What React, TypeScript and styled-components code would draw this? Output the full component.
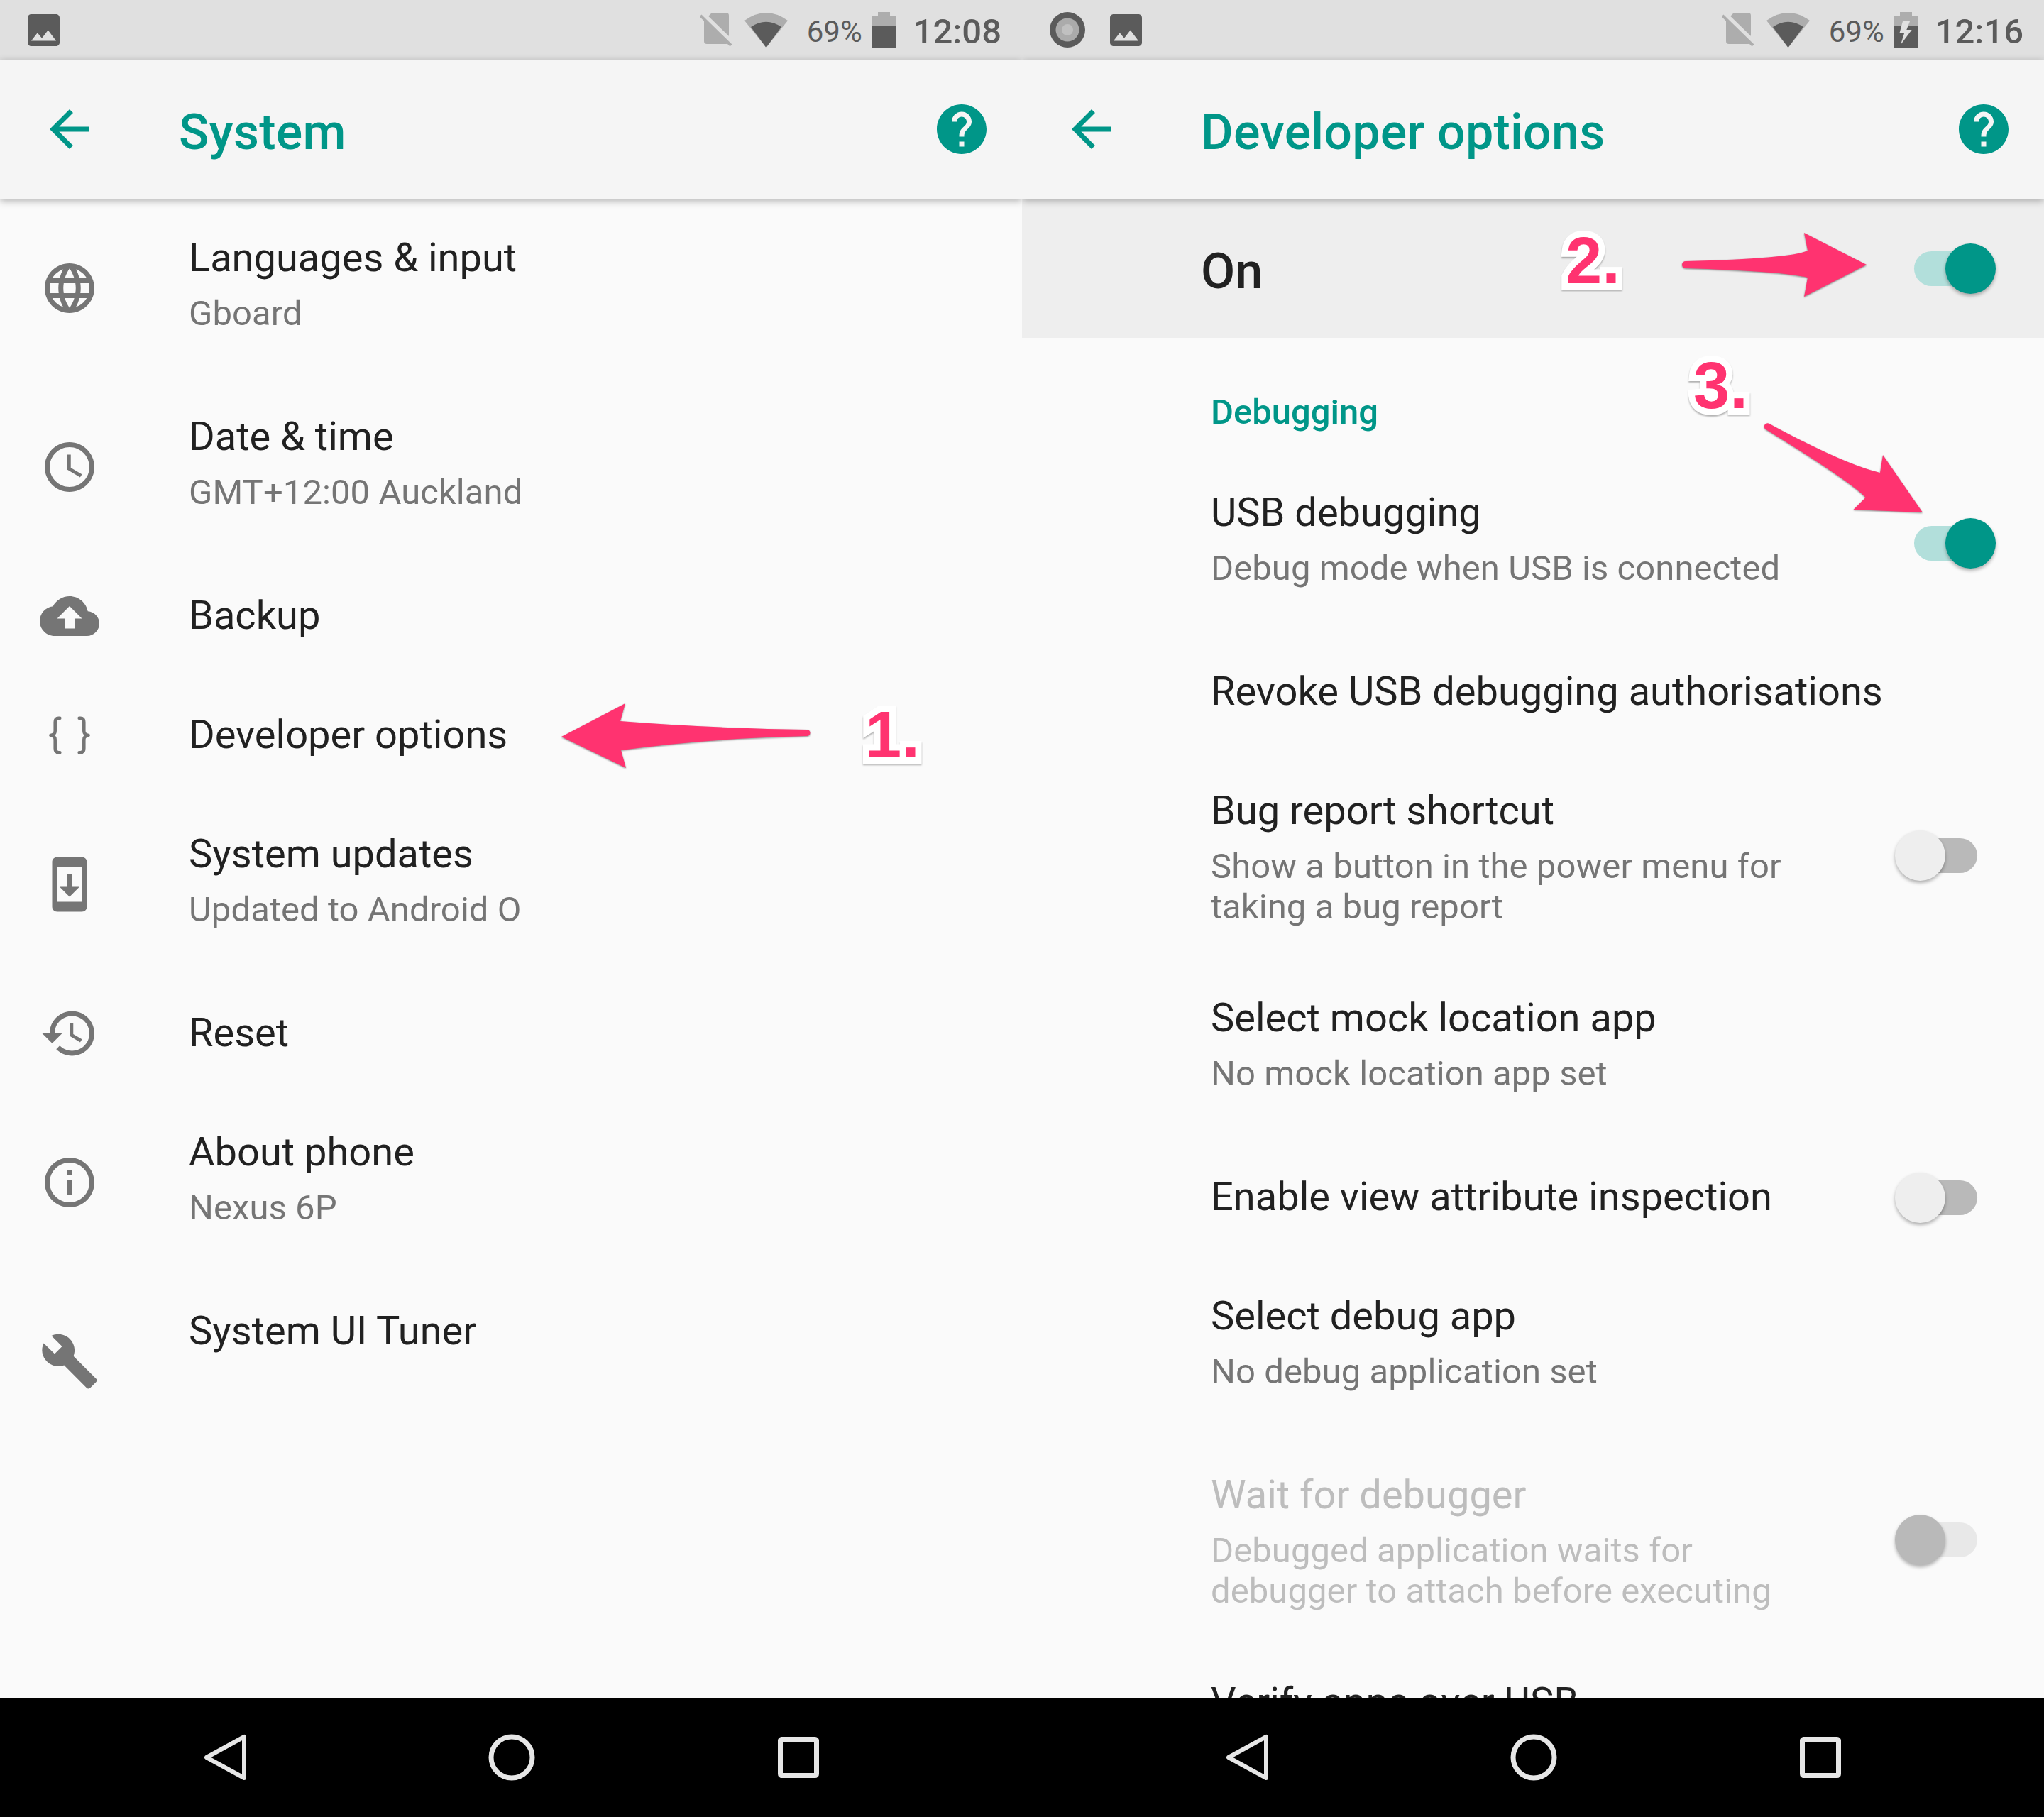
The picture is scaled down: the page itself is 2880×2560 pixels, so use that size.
import React from 'react';
import styled, { createGlobalStyle } from 'styled-components';

const ICONS: Record<string, string> = {
  language:
    'M11.99 2C6.47 2 2 6.48 2 12s4.47 10 9.99 10C17.52 22 22 17.52 22 12S17.52 2 11.99 2zm6.93 6h-2.95c-.32-1.25-.78-2.45-1.38-3.56 1.84.63 3.37 1.91 4.33 3.56zM12 4.04c.83 1.2 1.48 2.53 1.91 3.96h-3.82c.43-1.43 1.08-2.76 1.91-3.96zM4.26 14C4.1 13.36 4 12.69 4 12s.1-1.36.26-2h3.38c-.08.66-.14 1.32-.14 2 0 .68.06 1.34.14 2H4.26zm.82 2h2.95c.32 1.25.78 2.45 1.38 3.56-1.84-.63-3.37-1.9-4.33-3.56zm2.95-8H5.08c.96-1.66 2.49-2.93 4.33-3.56C8.81 5.55 8.35 6.75 8.03 8zM12 19.96c-.83-1.2-1.48-2.53-1.91-3.96h3.82c-.43 1.43-1.08 2.76-1.91 3.96zM14.34 14H9.66c-.09-.66-.16-1.32-.16-2 0-.68.07-1.35.16-2h4.68c.09.65.16 1.32.16 2 0 .68-.07 1.34-.16 2zm.25 5.56c.6-1.11 1.06-2.31 1.38-3.56h2.95c-.96 1.65-2.49 2.93-4.33 3.56zM16.36 14c.08-.66.14-1.32.14-2 0-.68-.06-1.34-.14-2h3.38c.16.64.26 1.31.26 2s-.1 1.36-.26 2h-3.38z',
  clock:
    'M11.99 2C6.47 2 2 6.48 2 12s4.47 10 9.99 10C17.52 22 22 17.52 22 12S17.52 2 11.99 2zM12 20c-4.42 0-8-3.58-8-8s3.58-8 8-8 8 3.58 8 8-3.58 8-8 8zM12.5 7H11v6l5.25 3.15.75-1.23-4.5-2.67z',
  backup:
    'M19.35 10.04C18.67 6.59 15.64 4 12 4 9.11 4 6.6 5.64 5.35 8.04 2.34 8.36 0 10.91 0 14c0 3.31 2.69 6 6 6h13c2.76 0 5-2.24 5-5 0-2.64-2.05-4.78-4.65-4.96zM14 13v4h-4v-4H7l5-5 5 5h-3z',
  update:
    'M17 1.01L7 1c-1.1 0-2 .9-2 2v18c0 1.1.9 2 2 2h10c1.1 0 2-.9 2-2V3c0-1.1-.9-1.99-2-1.99zM17 19H7V5h10v14zm-1-6h-3V8h-2v5H8l4 4 4-4z',
  restore:
    'M13 3c-4.97 0-9 4.03-9 9H1l3.89 3.89.07.14L9 12H6c0-3.87 3.13-7 7-7s7 3.13 7 7-3.13 7-7 7c-1.93 0-3.68-.79-4.94-2.06l-1.42 1.42C8.27 19.99 10.51 21 13 21c4.97 0 9-4.03 9-9s-4.03-9-9-9zm-1 5v5l4.28 2.54.72-1.21-3.5-2.08V8H12z',
  info:
    'M11 17h2v-6h-2v6zm1-15C6.48 2 2 6.48 2 12s4.48 10 10 10 10-4.48 10-10S17.52 2 12 2zm0 18c-4.41 0-8-3.59-8-8s3.59-8 8-8 8 3.59 8 8-3.59 8-8 8zM11 9h2V7h-2v2z',
  build:
    'M22.7 19l-9.1-9.1c.9-2.3.4-5-1.5-6.9-2-2-5-2.4-7.4-1.3L9 6 6 9 1.6 4.7C.4 7.1.9 10.1 2.9 12.1c1.9 1.9 4.6 2.4 6.9 1.5l9.1 9.1c.4.4 1 .4 1.4 0l2.3-2.3c.5-.4.5-1.1.1-1.4z',
};

const ARROW_BACK = 'M20 11H7.83l5.59-5.59L12 4l-8 8 8 8 1.41-1.41L7.83 13H20v-2z';
const HELP =
  'M12 2C6.48 2 2 6.48 2 12s4.48 10 10 10 10-4.48 10-10S17.52 2 12 2zm1 17h-2v-2h2v2zm2.07-7.75l-.9.92C13.45 12.9 13 13.5 13 15h-2v-.5c0-1.1.45-2.1 1.17-2.83l1.24-1.26c.37-.36.59-.86.59-1.41 0-1.1-.9-2-2-2s-2 .9-2 2H8c0-2.21 1.79-4 4-4s4 1.79 4 4c0 .88-.36 1.68-.93 2.25z';
const PHOTO = 'M21 19V5c0-1.1-.9-2-2-2H5c-1.1 0-2 .9-2 2v14c0 1.1.9 2 2 2h14c1.1 0 2-.9 2-2zM8.5 13.5l2.5 3.01L14.5 12l4.5 6H5l3.5-4.5z';

type Item = { title: string; summary?: string; icon: string };

const SYSTEM_ITEMS: Item[] = [
  { title: 'Languages & input', summary: 'Gboard', icon: 'language' },
  { title: 'Date & time', summary: 'GMT+12:00 Auckland', icon: 'clock' },
  { title: 'Backup', icon: 'backup' },
  { title: 'Developer options', icon: 'braces' },
  { title: 'System updates', summary: 'Updated to Android O', icon: 'update' },
  { title: 'Reset', icon: 'restore' },
  { title: 'About phone', summary: 'Nexus 6P', icon: 'info' },
  { title: 'System UI Tuner', summary: '\u00a0', icon: 'build' },
];

type Option = { title: string; summary?: string; height: number; toggle?: 'on' | 'off' | 'disabled'; disabled?: boolean };

const DEV_OPTIONS: Option[] = [
  { title: 'USB debugging', summary: 'Debug mode when USB is connected', height: 252, toggle: 'on' },
  { title: 'Revoke USB debugging authorisations', height: 168 },
  { title: 'Bug report shortcut', summary: 'Show a button in the power menu for taking a bug report', height: 292, toggle: 'off' },
  { title: 'Select mock location app', summary: 'No mock location app set', height: 252 },
  { title: 'Enable view attribute inspection', height: 168, toggle: 'off' },
  { title: 'Select debug app', summary: 'No debug application set', height: 252 },
  { title: 'Wait for debugger', summary: 'Debugged application waits for debugger to attach before executing', height: 292, toggle: 'disabled', disabled: true },
  { title: 'Verify apps over USB', height: 168 },
];

const ARROWS = [
  'M791 1038 L881 991 L874 1016 Q1000 1026 1137 1028 A4.5 4.5 0 0 1 1137 1037 Q1000 1040 875 1057 L882 1082 Z',
  'M2630 373 L2542 328 L2547 353 Q2525 364 2375 368 A5 5 0 0 0 2375 378 Q2510 382 2547 391 L2542 418 Z',
  'M2709 722 L2653 641 L2649 666 Q2600 655 2493 597 A4 4 0 0 0 2488 605 Q2610 680 2628.5 701 L2611.5 718 Z',
];

const NUMBERS = [
  { text: '1.', x: 1219, y: 1002 },
  { text: '2.', x: 2206, y: 334 },
  { text: '3.', x: 2386, y: 510 },
];

function ItemIcon({ name }: { name: string }) {
  if (name === 'braces') {
    return (
      <RowIcon viewBox="0 0 24 24" fill="none" stroke="#757575" strokeWidth="1.3" strokeLinecap="round" strokeLinejoin="round">
        <path d="M8.1 5.1 H7.6 C6.6 5.1 6.2 5.7 6.2 6.7 V10.3 C6.2 11.3 5.7 11.8 4.4 12 C5.7 12.2 6.2 12.7 6.2 13.7 V17.3 C6.2 18.3 6.6 18.9 7.6 18.9 H8.1" />
        <path d="M15.9 5.1 H16.4 C17.4 5.1 17.8 5.7 17.8 6.7 V10.3 C17.8 11.3 18.3 11.8 19.6 12 C18.3 12.2 17.8 12.7 17.8 13.7 V17.3 C17.8 18.3 17.4 18.9 16.4 18.9 H15.9" />
      </RowIcon>
    );
  }
  return (
    <RowIcon viewBox="0 0 24 24">
      <path d={ICONS[name]} fill="#757575" />
    </RowIcon>
  );
}

function StatusBar({ time, charging, recording }: { time: string; charging?: boolean; recording?: boolean }) {
  return (
    <StatusRow>
      <StatusGroup>
        {recording && (
          <RecordIcon viewBox="0 0 50 50">
            <circle cx="25" cy="25" r="25" fill="#5b5b5b" />
            <circle cx="25" cy="25" r="16.5" fill="#ababab" />
            <circle cx="25" cy="25" r="8" fill="#c0c0c0" />
          </RecordIcon>
        )}
        <PhotoIcon viewBox="3 3 18 18">
          <path d={PHOTO} fill="#5b5b5b" />
        </PhotoIcon>
      </StatusGroup>
      <StatusRight>
        <SimIcon viewBox="0 0 46 48">
          <path d="M17 0 H37 Q41 0 41 4 V40 Q41 44 37 44 H10 Q6 44 6 40 V11 Z" fill="#adadad" />
          <path d="M3 0 L46 42" fill="none" stroke="#e0e0e0" strokeWidth="6" />
          <path d="M1 4 L44 46" fill="none" stroke="#adadad" strokeWidth="4" />
        </SimIcon>
        <WifiIcon viewBox="0 0 61 49">
          <path d="M30.5 49 L0 11 Q30.500 -11 61 11 Z" fill="#adadad" />
          <path d="M30.5 49 L9 20 Q30.500 5.400 52 20 Z" fill="#5b5b5b" />
        </WifiIcon>
        <BatteryText>69%</BatteryText>
        <BatteryIcon viewBox="0 0 33 51">
          <path d="M8 0 H25 V5 H33 V20 H0 V5 H8 Z" fill="#adadad" />
          <rect y="20" width="33" height="31" fill="#5b5b5b" />
          {charging && <path d="M12 13 H22 L17.3 25 H24.700 L9 46 L14 30 H7.300 Z" fill="#e0e0e0" />}
        </BatteryIcon>
        <Clock>{time}</Clock>
      </StatusRight>
    </StatusRow>
  );
}

function AppBar({ title }: { title: string }) {
  return (
    <Toolbar>
      <ToolbarIcon viewBox="0 0 24 24">
        <path d={ARROW_BACK} fill="#009688" />
      </ToolbarIcon>
      <ToolbarTitle>{title}</ToolbarTitle>
      <ToolbarIcon viewBox="0 0 24 24">
        <path d={HELP} fill="#009688" />
      </ToolbarIcon>
    </Toolbar>
  );
}

function NavigationBar() {
  return (
    <NavBar>
      <NavIcon viewBox="0 0 84 84">
        <path d="M69 13 V71 L16 42 Z" fill="none" stroke="#e6e6e6" strokeWidth="6" strokeLinejoin="round" />
      </NavIcon>
      <NavIcon viewBox="0 0 84 84">
        <circle cx="42" cy="42" r="29" fill="none" stroke="#e6e6e6" strokeWidth="7" />
      </NavIcon>
      <NavIcon viewBox="0 0 84 84">
        <rect x="16.500" y="16.500" width="51" height="51" rx="2" fill="none" stroke="#e6e6e6" strokeWidth="7" />
      </NavIcon>
    </NavBar>
  );
}

function Toggle({ state }: { state: 'on' | 'off' | 'disabled' }) {
  return (
    <Track $state={state}>
      <Thumb $state={state} />
    </Track>
  );
}

export default function App() {
  return (
    <>
      <GlobalStyle />
      <Page>
        <Panel>
          <StatusBar time="12:08" />
          <AppBar title="System" />
          <Content>
            {SYSTEM_ITEMS.map((item) => (
              <SettingRow key={item.title} $height={item.summary ? 252 : 168}>
                <IconSlot>
                  <ItemIcon name={item.icon} />
                </IconSlot>
                <RowText>
                  <RowTitle>{item.title}</RowTitle>
                  {item.summary && <RowSummary>{item.summary}</RowSummary>}
                </RowText>
              </SettingRow>
            ))}
          </Content>
          <NavigationBar />
        </Panel>
        <Panel>
          <StatusBar time="12:16" charging recording />
          <AppBar title="Developer options" />
          <Content>
            <MasterSwitch>
              <MasterLabel>On</MasterLabel>
              <Toggle state="on" />
            </MasterSwitch>
            <SectionHeader>Debugging</SectionHeader>
            {DEV_OPTIONS.map((option) => (
              <OptionRow key={option.title} $height={option.height}>
                <RowText>
                  <RowTitle $disabled={option.disabled}>{option.title}</RowTitle>
                  {option.summary && <RowSummary $disabled={option.disabled}>{option.summary}</RowSummary>}
                </RowText>
                {option.toggle && <Toggle state={option.toggle} />}
              </OptionRow>
            ))}
          </Content>
          <NavigationBar />
        </Panel>
        <ArrowLayer viewBox="0 0 2880 2560">
          {ARROWS.map((d) => (
            <path key={d} d={d} fill="#ff3370" />
          ))}
        </ArrowLayer>
        {NUMBERS.map((n) => (
          <StepNumber key={n.text} $x={n.x} $y={n.y}>
            {n.text}
          </StepNumber>
        ))}
      </Page>
    </>
  );
}

const GlobalStyle = createGlobalStyle`
  html, body {
    margin: 0;
    padding: 0;
    background: #fafafa;
  }
  body {
    font-family: Roboto, "Liberation Sans", sans-serif;
  }
`;

const Page = styled.div`
  position: relative;
  display: grid;
  grid-template-columns: 1440px 1440px;
  width: 2880px;
  height: 2560px;
  overflow: hidden;
`;

const Panel = styled.section`
  display: flex;
  flex-direction: column;
  height: 2560px;
  overflow: hidden;
  background: #fafafa;
`;

const StatusRow = styled.div`
  display: flex;
  align-items: center;
  justify-content: space-between;
  flex: 0 0 84px;
  padding: 0 29px 0 39px;
  background: #e0e0e0;
  color: #5b5b5b;
`;

const StatusGroup = styled.div`
  display: flex;
  align-items: center;
  gap: 35px;
`;

const StatusRight = styled.div`
  display: flex;
  align-items: center;
`;

const RecordIcon = styled.svg`
  width: 50px;
  height: 50px;
`;

const PhotoIcon = styled.svg`
  width: 45px;
  height: 45px;
`;

const SimIcon = styled.svg`
  width: 46px;
  height: 48px;
`;

const WifiIcon = styled.svg`
  width: 61px;
  height: 49px;
  margin-left: 17px;
`;

const BatteryText = styled.span`
  margin-left: 27px;
  padding-top: 5px;
  font-size: 42px;
  line-height: 79px;
`;

const BatteryIcon = styled.svg`
  width: 33px;
  height: 51px;
  margin-left: 14px;
`;

const Clock = styled.span`
  margin-left: 25px;
  padding-top: 5px;
  font-size: 49px;
  font-weight: 500;
  line-height: 79px;
`;

const Toolbar = styled.header`
  position: relative;
  z-index: 2;
  display: flex;
  align-items: center;
  flex: 0 0 196px;
  padding: 0 43px 0 56px;
  background: #f5f5f5;
  box-shadow: 0 3px 10px rgba(0, 0, 0, 0.3);
`;

const ToolbarIcon = styled.svg`
  flex: 0 0 84px;
  width: 84px;
  height: 84px;
`;

const ToolbarTitle = styled.h1`
  flex: 1;
  margin: 0 0 0 112px;
  padding-top: 7px;
  color: #009688;
  font-size: 70px;
  font-weight: 500;
  line-height: 84px;
  letter-spacing: 0.2px;
`;

const Content = styled.main`
  flex: 1;
  min-height: 0;
  overflow: hidden;
`;

const SettingRow = styled.div<{ $height: number }>`
  display: flex;
  height: ${(p) => p.$height}px;
`;

const IconSlot = styled.div`
  display: flex;
  align-items: center;
  flex: 0 0 266px;
  padding-left: 56px;
  box-sizing: border-box;
`;

const RowIcon = styled.svg`
  width: 84px;
  height: 84px;
`;

const RowText = styled.div`
  flex: 1;
  min-width: 0;
  padding-top: 45px;
`;

const RowTitle = styled.div<{ $disabled?: boolean }>`
  color: ${(p) => (p.$disabled ? '#bdbdbd' : '#212121')};
  font-size: 56px;
  line-height: 77px;
`;

const RowSummary = styled.div<{ $disabled?: boolean }>`
  max-width: 820px;
  margin-top: 11px;
  color: ${(p) => (p.$disabled ? '#bdbdbd' : '#757575')};
  font-size: 49px;
  line-height: 57px;
  letter-spacing: 0.07px;
`;

const MasterSwitch = styled.div`
  display: flex;
  align-items: center;
  justify-content: space-between;
  height: 196px;
  padding-left: 252px;
  background: #eeeeee;
`;

const MasterLabel = styled.div`
  padding-top: 7px;
  color: #212121;
  font-size: 70px;
  font-weight: 500;
`;

const SectionHeader = styled.h2`
  height: 87px;
  margin: 0;
  padding: 76px 0 0 266px;
  color: #009688;
  font-size: 49px;
  font-weight: 500;
  line-height: 57px;
`;

const OptionRow = styled.div<{ $height: number }>`
  display: flex;
  align-items: center;
  height: ${(p) => p.$height}px;
  padding-left: 266px;

  ${RowText} {
    align-self: flex-start;
  }
`;

const Track = styled.div<{ $state: string }>`
  position: relative;
  flex: 0 0 89px;
  height: 49px;
  margin-right: 94px;
  border-radius: 25px;
  background: ${(p) => (p.$state === 'on' ? '#b2dfdb' : p.$state === 'off' ? '#b9b9b9' : '#e8e8e8')};
`;

const Thumb = styled.div<{ $state: string }>`
  position: absolute;
  top: -11px;
  left: ${(p) => (p.$state === 'on' ? '44px' : '-27px')};
  width: 71px;
  height: 71px;
  border-radius: 50%;
  background: ${(p) => (p.$state === 'on' ? '#009688' : p.$state === 'off' ? '#eeeeee' : '#b9b9b9')};
  box-shadow: 0 3px 5px rgba(0, 0, 0, 0.3);
`;

const NavBar = styled.nav`
  position: relative;
  z-index: 1;
  display: flex;
  align-items: center;
  justify-content: center;
  gap: 320px;
  flex: 0 0 168px;
  padding-left: 2px;
  background: #000000;
`;

const NavIcon = styled.svg`
  width: 84px;
  height: 84px;
`;

const ArrowLayer = styled.svg`
  position: absolute;
  top: 0;
  left: 0;
  z-index: 3;
  width: 2880px;
  height: 2560px;
  pointer-events: none;
  filter: drop-shadow(0 1px 1px rgba(0, 0, 0, 0.45));
`;

const StepNumber = styled.div<{ $x: number; $y: number }>`
  position: absolute;
  left: ${(p) => p.$x}px;
  top: ${(p) => p.$y}px;
  z-index: 4;
  color: #ff3370;
  font-family: "Liberation Sans", Arial, sans-serif;
  font-size: 92px;
  font-weight: 700;
  line-height: 66px;
  paint-order: stroke fill;
  -webkit-text-stroke: 18px #ffffff;
  filter: drop-shadow(0 2px 1px rgba(0, 0, 0, 0.3));
`;
